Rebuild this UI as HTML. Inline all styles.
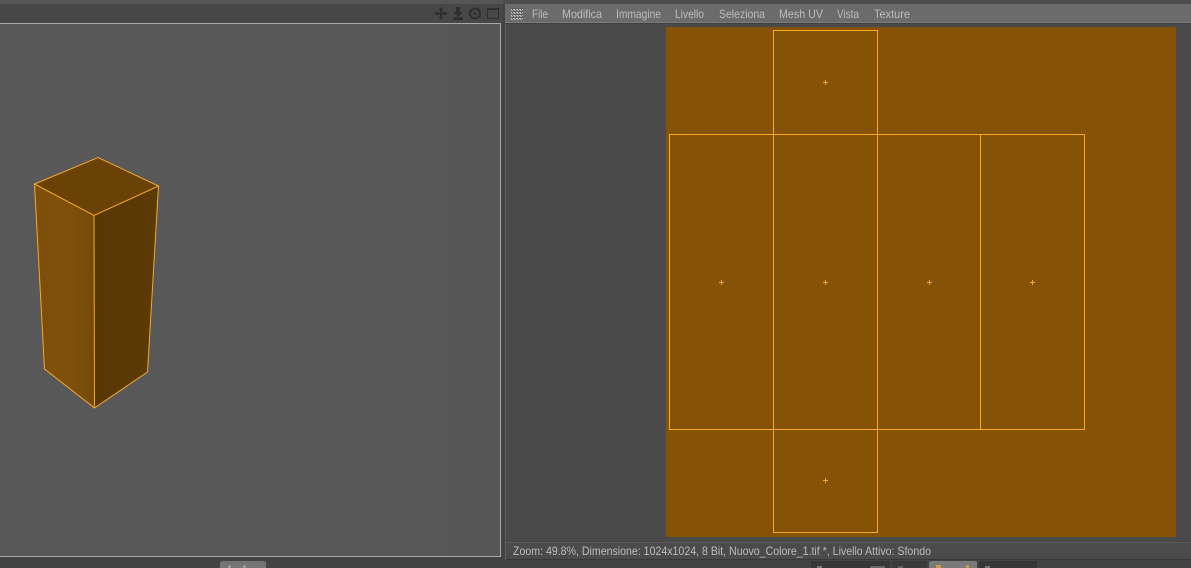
<!DOCTYPE html>
<html lang="it"><head><meta charset="utf-8"><title>UV</title>
<style>html,body{margin:0;padding:0;background:#434343;width:1191px;height:568px;overflow:hidden}svg{display:block}
text{font-family:"Liberation Sans",sans-serif;font-size:12px;fill:#bcbcbc}</style></head>
<body>
<svg width="1191" height="568" viewBox="0 0 1191 568" xmlns="http://www.w3.org/2000/svg">
<defs>
<filter id="soft" x="-5%" y="-20%" width="110%" height="140%"><feGaussianBlur stdDeviation="0.35"/></filter>
<linearGradient id="lf" x1="0" x2="1" y1="0" y2="0"><stop offset="0" stop-color="#7e4f0a"/><stop offset="0.6" stop-color="#7f500b"/><stop offset="1" stop-color="#754a0a"/></linearGradient>
<linearGradient id="rf" x1="0" x2="1" y1="0" y2="0"><stop offset="0" stop-color="#583704"/><stop offset="1" stop-color="#5c3a05"/></linearGradient>
<pattern id="ht" width="3" height="3" patternUnits="userSpaceOnUse"><rect width="3" height="3" fill="#5c5c5c"/><rect width="2" height="1" fill="#c4c4c4"/><rect x="1" y="1" width="2" height="1" fill="#a8a8a8"/></pattern>
</defs>
<rect width="1191" height="568" fill="#434343"/>
<!-- left panel -->
<rect x="0" y="0" width="503" height="4" fill="#555"/>
<rect x="0" y="4" width="503" height="19" fill="#474747"/>
<rect x="0" y="23" width="501" height="534" fill="#585858"/>
<rect x="449" y="24" width="51" height="532" fill="#565656"/>
<path d="M0 23.500H500.500V556.500H0" fill="none" stroke="#a8a8a8"/>
<!-- toolbar icons -->
<g filter="url(#soft)">
<g fill="#2e2e2e">
<path d="M441 7l2.500 3h-1.500v2.500h2.500v-1.500l3 2.500-3 2.500v-1.500h-2.500v2.500h1.500l-2.500 3-2.500-3h1.500v-2.500h-2.500v1.500l-3-2.500 3-2.500v1.500h2.500v-2.500h-1.500z"/>
<path d="M456 7h4v5h3l-5 5-5-5h3zM453 17.500h10v2.500h-10z"/>
</g>
<circle cx="475" cy="13.500" r="5" fill="none" stroke="#2e2e2e" stroke-width="2"/>
<circle cx="475" cy="13.500" r="1.500" fill="#2e2e2e"/>
<rect x="487.500" y="8.500" width="11" height="10" fill="none" stroke="#2e2e2e"/>
<rect x="487" y="8" width="12" height="2" fill="#2e2e2e"/>
</g>
<!-- 3D box -->
<path d="M34.500 184L98 157.500 158.500 186 94 215.500Z" fill="#6a4206"/>
<path d="M34.500 184L94 215.500 94.500 408 44.500 369Z" fill="url(#lf)"/>
<path d="M94 215.500L158.500 186 147.500 372 94.500 408Z" fill="url(#rf)"/>
<path d="M34.500 184L98 157.500 158.500 186 94 215.500ZM94 215.500L94.500 408M34.500 184L44.500 369 94.500 408 147.500 372 158.500 186" fill="none" stroke="#f6a826" stroke-width="1"/>
<!-- right panel -->
<rect x="503" y="0" width="688" height="4" fill="#4c4c4c"/>
<rect x="505" y="4" width="686" height="18" fill="#6b6b6b"/>
<rect x="505" y="22" width="686" height="1" fill="#7c7c7c"/>
<rect x="505" y="23" width="686" height="1" fill="#3f3f3f"/>
<rect x="505" y="24" width="686" height="518" fill="#4a4a4a"/>
<rect x="505" y="24" width="1" height="536" fill="#5e5e5e"/>
<rect x="511" y="8" width="12" height="12" fill="url(#ht)"/>
<g filter="url(#soft)">
<text x="532" y="18" textLength="16" lengthAdjust="spacingAndGlyphs">File</text>
<text x="562" y="18" textLength="40" lengthAdjust="spacingAndGlyphs">Modifica</text>
<text x="616" y="18" textLength="45" lengthAdjust="spacingAndGlyphs">Immagine</text>
<text x="675" y="18" textLength="29" lengthAdjust="spacingAndGlyphs">Livello</text>
<text x="719" y="18" textLength="46" lengthAdjust="spacingAndGlyphs">Seleziona</text>
<text x="779" y="18" textLength="44" lengthAdjust="spacingAndGlyphs">Mesh UV</text>
<text x="837" y="18" textLength="22" lengthAdjust="spacingAndGlyphs">Vista</text>
<text x="874" y="18" textLength="36" lengthAdjust="spacingAndGlyphs">Texture</text>
</g>
<!-- UV canvas -->
<rect x="666" y="27" width="510" height="510" fill="#855206"/>
<g fill="none" stroke="#f6a826" stroke-width="1">
<rect x="773.500" y="30.500" width="104" height="104"/>
<rect x="669.500" y="134.500" width="415" height="295"/>
<path d="M773.500 134.500V429.500M877.500 134.500V429.500M980.500 134.500V429.500"/>
<rect x="773.500" y="429.500" width="104" height="103"/>
<path d="M823 82.500h5M825.500 80v5M719 282.500h5M721.500 280v5M823 282.500h5M825.500 280v5M927 282.500h5M929.500 280v5M1030 282.500h5M1032.500 280v5M823 480.500h5M825.500 478v5"/>
</g>
<!-- status -->
<rect x="506" y="542" width="685" height="1" fill="#5a5a5a"/>
<rect x="506" y="543" width="685" height="16" fill="#4b4b4b"/>
<rect x="506" y="559" width="685" height="1" fill="#383838"/>
<text x="513" y="555" textLength="418" lengthAdjust="spacingAndGlyphs" filter="url(#soft)">Zoom: 49.8%, Dimensione: 1024x1024, 8 Bit, Nuovo_Colore_1.tif *, Livello Attivo: Sfondo</text>
<!-- bottom tabs -->
<path d="M220 568v-4q0-3 3-3h40q3 0 3 3v4z" fill="#747474"/>
<path d="M811 568v-5q0-2 2-2h75q2 0 2 2v5z" fill="#363636"/>
<path d="M892 568v-5q0-2 2-2h31q2 0 2 2v5z" fill="#3a3a3a"/>
<path d="M929 568v-5q0-2 3-2h42q3 0 3 2v5z" fill="#7a7a7a"/>
<path d="M979 568v-5q0-2 2-2h54q2 0 2 2v5z" fill="#363636"/>
<g filter="url(#soft)">
<rect x="228" y="565" width="3" height="3" fill="#a09888"/><rect x="243" y="565" width="3" height="3" fill="#a09888"/>
<rect x="936" y="565" width="5" height="3" fill="#d09a40"/><rect x="966" y="565" width="3" height="3" fill="#c89a50"/>
<rect x="817" y="566" width="5" height="2" fill="#777"/><rect x="870" y="566" width="15" height="2" fill="#666"/><rect x="985" y="566" width="5" height="2" fill="#777"/><rect x="898" y="566" width="5" height="2" fill="#666"/>
</g>
</svg>
</body></html>
